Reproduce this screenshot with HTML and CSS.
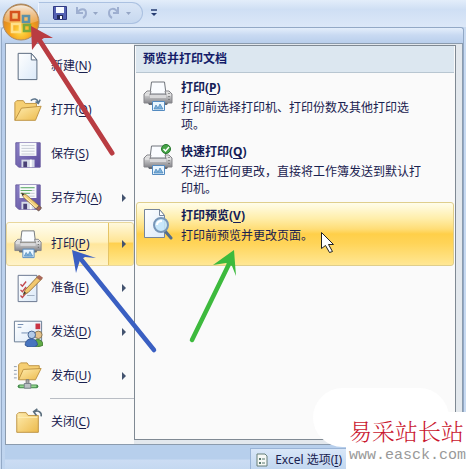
FILE: index.html
```html
<!DOCTYPE html>
<html lang="zh-CN">
<head>
<meta charset="utf-8">
<title>Excel</title>
<link rel="stylesheet" href="styles.css">
</head>
<body>
<svg class="defs" aria-hidden="true">
  <defs>
    <linearGradient id="paper" x1="0" y1="0" x2="1" y2="1"><stop offset="0" stop-color="#fff"/><stop offset="1" stop-color="#dbe9f8"/></linearGradient>
    <linearGradient id="folder" x1="0" y1="0" x2="1" y2="1"><stop offset="0" stop-color="#ffedb0"/><stop offset="1" stop-color="#ecba4c"/></linearGradient>
    <linearGradient id="metal" x1="0" y1="0" x2="0" y2="1"><stop offset="0" stop-color="#eee"/><stop offset="0.5" stop-color="#bcbcbe"/><stop offset="1" stop-color="#87878c"/></linearGradient>
    <linearGradient id="purple" x1="0" y1="0" x2="1" y2="1"><stop offset="0" stop-color="#8c82c6"/><stop offset="1" stop-color="#5b4b9b"/></linearGradient>
    <radialGradient id="orb" cx="0.5" cy="0.75" r="0.7"><stop offset="0" stop-color="#ffe14a"/><stop offset="0.45" stop-color="#f5a21d"/><stop offset="0.85" stop-color="#d98325"/><stop offset="1" stop-color="#b9813f"/></radialGradient>
    <linearGradient id="gloss" x1="0" y1="0" x2="0" y2="1"><stop offset="0" stop-color="#fff" stop-opacity="0.85"/><stop offset="1" stop-color="#fbd9a8" stop-opacity="0.3"/></linearGradient>
    <symbol id="printer" viewBox="0 0 30 32">
      <path d="M7 14 8.500 2h13L23 14z" fill="#fafcff" stroke="#70757c"/>
      <path d="M4 11h4l-1 4h16l-1-4h4l3 3v9H1v-9z" fill="url(#metal)" stroke="#85858a"/>
      <path d="M2 15h4M24 15h4" stroke="#eee"/>
      <path d="M26 13v7" stroke="#555" stroke-dasharray="1 2"/>
      <path d="M7 15h16v3H7z" fill="#d8d8da"/>
      <path d="M5 23h20l-1 2H6z" fill="#686c73"/>
      <path d="M9.500 21.500h12v9h-12z" fill="#e9f6ff" stroke="#538ac0"/>
      <path d="m11 29 2-4 2 3 2-4 3 5z" fill="#7ab1dc" stroke="#4c83b4" stroke-width="0.700"/>
    </symbol>
    <symbol id="disk" viewBox="0 0 30 30">
      <path d="M2 2h26v26H5l-3-3z" fill="url(#purple)" stroke="#675b9e"/>
      <path d="M6 2h18v14H6z" fill="#f8fafc"/>
      <path d="M8 5h14M8 8h14M8 11h14M8 14h14" stroke="#c4cad4"/>
      <path d="M8 20h14v8H8z" fill="#d6dbe8"/><path d="M10 22h4v6h-4z" fill="#4a4177"/><path d="M17 20h2v8h-2z" fill="#fff"/>
    </symbol>
    <symbol id="pencil" viewBox="0 0 24 22">
      <path d="m2 2 2.500 5 14 12.500 3-3L7 4z" fill="#f3cf79" stroke="#94713d" stroke-width="0.800"/>
      <path d="m4 5 14 13" stroke="#fff1bb"/><path d="m2 2 1 3 2-2z" fill="#333"/>
      <path d="m17 18 3-3 2.500 2.500-3 3z" fill="#a56553" stroke="#635151"/>
    </symbol>
  </defs>
</svg>

<header class="titlebar">
  <div class="quick">
    <button class="tool" aria-label="保存"><svg width="14" height="14" viewBox="0 0 14 14"><path d="M.5.500h13v13h-12l-1-1z" fill="#5360b2" stroke="#303a83"/><path d="M3 1h8v6H3z" fill="#f6faff"/><path d="M4 9h6v4H4z" fill="#222a57"/><path d="M7 10h2v3H7z" fill="#fff"/></svg></button>
    <button class="tool undo" aria-label="撤消"><svg width="24" height="14" viewBox="0 0 24 14"><path d="M2 1v6h6M2 7c3-5 9-5 9 0 0 2-1 4-3 5" fill="none" stroke="#9eafd0" stroke-width="2"/><path d="M18 6h5l-2.500 3z" fill="#95a6c5"/></svg></button>
    <button class="tool" aria-label="恢复"><svg width="26" height="14" viewBox="0 0 26 14"><path d="M11 1v6H6M11 7C8 1 2 2 2 7c0 2 1 4 3 5" fill="none" stroke="#9eafd0" stroke-width="2"/><path d="M19 6h5l-2.500 3z" fill="#95a6c5"/></svg></button>
  </div>
  <button class="tool" aria-label="自定义快速访问工具栏"><svg width="8" height="8" viewBox="0 0 8 8"><path d="M1 1h6" stroke="#263d72" stroke-width="1.500"/><path d="M1 4h6L4 7z" fill="#263d72"/></svg></button>
</header>

<main class="menu">
  <div class="menu-body">
    <nav class="commands">
      <button class="command"><svg class="icon" viewBox="0 0 32 32"><path d="M5.500 2.500h14l6 7v21h-20z" fill="url(#paper)" stroke="#526379"/><path d="M19.500 2.500v7h6z" fill="#fff" stroke="#526379"/></svg><span>新建(<u>N</u>)</span></button>
      <button class="command"><svg class="icon" viewBox="0 0 32 32"><path d="M2 27V8l2-2h7l2 3h12v5" fill="#f6cf73" stroke="#bd9140"/><path d="M2 27 9 14l21-2-6 15z" fill="url(#folder)" stroke="#bd9140"/><path d="M19 6c3-3 7-2 8 2m-3-1 3 2 2-4" fill="none" stroke="#5c758c" stroke-width="1.700"/></svg><span>打开(<u>O</u>)</span></button>
      <button class="command"><svg class="icon" viewBox="0 0 32 32"><use href="#disk" x="1" y="2" width="30" height="30"/></svg><span>保存(<u>S</u>)</span></button>
      <button class="command"><svg class="icon" viewBox="0 0 32 32"><use href="#disk" x="1" y="0" width="30" height="30"/><path d="M8 5h15M8 8h12M8 11h10" stroke="#5aae62"/><use href="#pencil" x="7" y="8" width="25" height="24"/></svg><span>另存为(<u>A</u>)</span><i class="caret"></i></button>
      <hr class="rule">
      <button class="command active"><svg class="icon" viewBox="0 0 32 32"><use href="#printer" x="1" y="0" width="30" height="32"/></svg><span>打印(<u>P</u>)</span><i class="caret"></i></button>
      <button class="command"><svg class="icon" viewBox="0 0 32 32"><path d="M5.500 2.500h20v28h-20z" fill="url(#paper)" stroke="#63718b"/><path d="m8 12 2 2 4-5M8 18l2 2 4-5M8 24l2 2 4-5" fill="none" stroke="#c24a50" stroke-width="1.500"/><path d="M15 24h8" stroke="#9dacbe"/><path d="m11 23 2-5L27 3l4 3-15 15z" fill="#f2c86e" stroke="#94713d"/><path d="m25 5 3-3 4 3-3 3z" fill="#a9695b"/><path d="m11 23 1-3 2 1z" fill="#333"/></svg><span>准备(<u>E</u>)</span><i class="caret"></i></button>
      <button class="command"><svg class="icon" viewBox="0 0 32 32"><path d="M1.500 4.500h29v22h-29z" fill="url(#paper)" stroke="#657990"/><path d="M24 7h5v6h-5z" fill="#c93444"/><path d="M5 8h6M5 11h4M9 17h10" stroke="#6d89af"/><circle cx="27" cy="19" r="4" fill="#e4c18b" stroke="#83724e"/><path d="M21 30c0-8 11-8 11 0-3 2-8 2-11 0z" fill="#62ac46" stroke="#437c34"/><circle cx="20" cy="19" r="4" fill="#b4cbe7" stroke="#415f8d"/><path d="M13 30c0-9 13-9 13 0-4 3-9 3-13 0z" fill="#4774bf" stroke="#31538e"/></svg><span>发送(<u>D</u>)</span><i class="caret"></i></button>
      <button class="command"><svg class="icon" viewBox="0 0 32 32"><path d="M1 6h3M1 10h3M1 14h3M1 18h3" stroke="#8998ab"/><path d="M6 20V4l2-2h7l2 3h11v5" fill="#f6cf73" stroke="#bd9140"/><path d="m6 20 5-11 19-1-6 12z" fill="url(#folder)" stroke="#bd9140"/><path d="M14 20h3v5h-3z" fill="#aaa" stroke="#777"/><path d="M7 27h18" stroke="#438b4b" stroke-width="4" stroke-linecap="round"/><path d="M7 27h18" stroke="#93d38e" stroke-width="2"/><path d="M12 24h7v5h-7z" fill="#bbc1c4" stroke="#788089"/></svg><span>发布(<u>U</u>)</span><i class="caret"></i></button>
      <hr class="rule">
      <button class="command"><svg class="icon" viewBox="0 0 32 32"><path d="M4 27V8l2-2h8l2 3h11v18z" fill="url(#folder)" stroke="#bd9140"/><path d="M5 11h21" stroke="#fff0b9"/><path d="M30 10c1-4-3-7-7-5m3-3-4 3 3 4" fill="none" stroke="#5c6f7e" stroke-width="1.700"/></svg><span>关闭(<u>C</u>)</span></button>
    </nav>
    <section class="panel">
      <h1 class="panel-title">预览并打印文档</h1>
      <button class="choice">
        <svg class="choice-icon" viewBox="0 0 30 32"><use href="#printer" width="30" height="32"/></svg>
        <span class="choice-text"><strong>打印(<u>P</u>)</strong><span>打印前选择打印机、打印份数及其他打印选项。</span></span>
      </button>
      <button class="choice">
        <svg class="choice-icon" viewBox="0 0 30 32"><use href="#printer" width="30" height="32"/><circle cx="23" cy="5" r="4.500" fill="#47a447" stroke="#26772d"/><path d="m20.500 5 2 2 3.500-4" fill="none" stroke="#fff" stroke-width="1.500"/></svg>
        <span class="choice-text"><strong>快速打印(<u>Q</u>)</strong><span>不进行任何更改，直接将工作簿发送到默认打印机。</span></span>
      </button>
      <button class="choice selected">
        <svg class="choice-icon" viewBox="0 0 30 32"><path d="M1.500 1.500h15l5 6v22h-20z" fill="url(#paper)" stroke="#75859b"/><path d="M16.500 1.500v6h5z" fill="#fff" stroke="#75859b"/><path d="m22 23 6 7" stroke="#536d8b" stroke-width="3" stroke-linecap="round"/><circle cx="18" cy="17" r="7" fill="#c4e5fa" fill-opacity="0.900" stroke="#7796b8" stroke-width="2"/><path d="M14 17c0-3 2-4 5-4" fill="none" stroke="#fff" stroke-width="2"/></svg>
        <span class="choice-text"><strong>打印预览(<u>V</u>)</strong><span>打印前预览并更改页面。</span></span>
      </button>
    </section>
  </div>
  <footer class="menu-footer">
    <button class="options"><svg width="12" height="14" viewBox="0 0 12 14"><path d="M1 1h8l2 2v10H1z" fill="#f5f8f5" stroke="#667f78"/><path d="M3 5h2v2H3zM3 9h2v2H3z" fill="#59796e"/><path d="M6 6h3M6 10h3" stroke="#59796e"/></svg><span>Excel 选项(<u>I</u>)</span></button>
  </footer>
</main>

<button class="office" aria-label="Office 按钮"><svg viewBox="0 0 40 40">
  <circle cx="20" cy="20" r="18" fill="url(#orb)" stroke="#a98b6a"/>
  <path d="M3 19C4-2 36-2 37 19 28 23 12 23 3 19z" fill="url(#gloss)"/>
  <g fill="none" stroke-width="2.600"><path d="M10 10h8v8h-8z" stroke="#d5521e"/><path d="M22 14h6v6h-6z" stroke="#5b91a8"/><path d="M11 22h8v8h-8z" stroke="#ffe18a"/><path d="M23 23h6v6h-6z" stroke="#79a83d"/></g>
</svg></button>

<aside class="watermark"><span class="site">易采站长站</span><span class="url">www.easck.com</span></aside>

<svg class="marks" width="466" height="469" viewBox="0 0 466 469" aria-hidden="true">
  <path d="m112 153-72-112" stroke="#b93c42" stroke-width="5" stroke-linecap="round"/>
  <path d="m31 26 1 24 6-8 6-4 9 0z" fill="#b93c42"/>
  <path d="M154 350 80 258" stroke="#3a5fc2" stroke-width="4.500" stroke-linecap="round"/>
  <path d="m72 250 4 23 4-13 5-3 11 1z" fill="#3a5fc2"/>
  <path d="m192 340 37-76" stroke="#3dba3d" stroke-width="4.500" stroke-linecap="round"/>
  <path d="m234 250-21 15 13-2 6 3 4 10z" fill="#3dba3d"/>
  <path d="m321.500 232.500v16l4-3 4 7 3-1-4-7h5z" fill="#fff" stroke="#222"/>
</svg>
</body>
</html>
```
FILE: styles.css
```css
* { box-sizing: border-box; }
body {
  position: relative;
  margin: 0;
  min-height: 100vh;
  display: flex;
  flex-direction: column;
  overflow: hidden;
  background: #c8daf1;
  color: #19214f;
  font: 12px/16px "Noto Sans", "Noto Sans CJK SC", sans-serif;
}
button {
  margin: 0;
  padding: 0;
  border: 0;
  background: none;
  color: inherit;
  font: inherit;
  text-align: left;
}
svg { display: block; flex: none; }
u { text-underline-offset: 2px; }
.defs { position: absolute; width: 0; height: 0; }

.titlebar {
  display: flex;
  align-items: center;
  gap: 7px;
  height: 27px;
  padding: 0 0 1px 38px;
  background: linear-gradient(#e3edfa, #cfdff4 35%, #dce8f8);
}
.quick {
  display: flex;
  align-items: center;
  gap: 8px;
  height: 22px;
  width: 105px;
  padding-left: 14px;
  border: 1px solid #abc1e1;
  border-left-color: #eef5ff;
  border-radius: 0 11px 11px 0;
  background: linear-gradient(#dae6f6, #c7d8ef);
}

.menu {
  flex: 1;
  display: flex;
  flex-direction: column;
  margin: 0 2px 0 1px;
  padding: 0 0 0 3px;
  border: 1px solid #93a9c6;
  border-bottom: 0;
  border-radius: 3px 3px 0 0;
  background: linear-gradient(#e4eefb, #c9daf2 7px, #b7cdeb 16px, #c0d5ef);
}
.menu-body {
  display: grid;
  grid-template-columns: 128px 1fr;
  margin-top: 15px;
  border: 1px solid #8b9bad;
  background: #e3e8ed;
}
.commands { background: #fafafa; }
.command {
  display: flex;
  align-items: center;
  width: 100%;
  height: 44px;
  padding: 0 7px 0 6px;
  border: 1px solid transparent;
}
.icon { width: 30px; height: 30px; margin-right: 8px; }
.caret {
  margin-left: auto;
  border: 4px solid transparent;
  border-left-color: #43536f;
  border-right-width: 0;
}
.active {
  border-color: #e9d79c;
  border-radius: 3px;
  background:
    linear-gradient(90deg, transparent 101px, #e5c465 101px, #e5c465 102px, transparent 102px),
    linear-gradient(#fff8dc, #ffe492 45%, #ffd04e 48%, #ffe890) right / 25px 100% no-repeat,
    linear-gradient(#fffdf0, #fff1bf 45%, #ffe69c 50%, #fff3c8);
}
.rule { height: 1px; margin: 0 0 1px 44px; border: 0; background: #b9bdc4; }
.panel {
  margin: 1px 6px 4px 0;
  padding: 0 1px;
  border: 1px solid #7f8993;
  background: #fafafa;
}
.panel-title {
  margin: 0 0 1px;
  padding: 5px 7px;
  border-bottom: 1px solid #b8c6d1;
  background: #dce7f0;
  color: #151d69;
  font-size: 12px;
  line-height: 16px;
}
.choice {
  display: flex;
  align-items: flex-start;
  gap: 8px;
  width: 100%;
  min-height: 64px;
  padding: 5px 30px 3px 6px;
  border: 1px solid transparent;
}
.choice-icon { width: 30px; height: 32px; }
.choice-text { display: flex; flex-direction: column; gap: 3px; line-height: 17px; }
.choice-text strong { line-height: 16px; color: #151d57; }
.selected {
  border-color: #dfce8c;
  border-radius: 3px;
  background: linear-gradient(#fffdea, #ffeeaa 25%, #ffdd76 42%, #ffcf49 50%, #ffd458 65%, #ffe794);
}
.menu-footer {
  flex: 1;
  display: flex;
  justify-content: flex-end;
  padding: 3px 115px 0 0;
  background: linear-gradient(#b7cfec 14px, #cbdcf3 15px, #c2d7f0);
}
.options {
  display: flex;
  align-items: center;
  gap: 7px;
  height: 24px;
  padding: 0 5px;
  border: 1px solid #9ab4d6;
  background: linear-gradient(#d9e7f8, #bfd5ef);
}
.office { position: absolute; left: 1px; top: 2px; width: 40px; height: 40px; }
.marks { position: absolute; left: 0; top: 0; pointer-events: none; }
.watermark {
  position: absolute;
  z-index: 0;
  right: 0;
  bottom: 0;
  display: flex;
  flex-direction: column;
  width: 120px;
  height: 60px;
  padding: 3px 0 0 3px;
  background: #fff;
  white-space: nowrap;
}
.watermark::before {
  content: "";
  position: absolute;
  z-index: -1;
  left: -33px;
  top: -24px;
  width: 136px;
  height: 59px;
  border-radius: 30px;
  background: #fff;
}
.site {
  color: #c9152e;
  font: 300 23px/32px "Noto Serif CJK SC", "Noto Sans CJK SC", serif;
}
.url { color: #999; font: 15px/18px "Liberation Mono", monospace; }
```
